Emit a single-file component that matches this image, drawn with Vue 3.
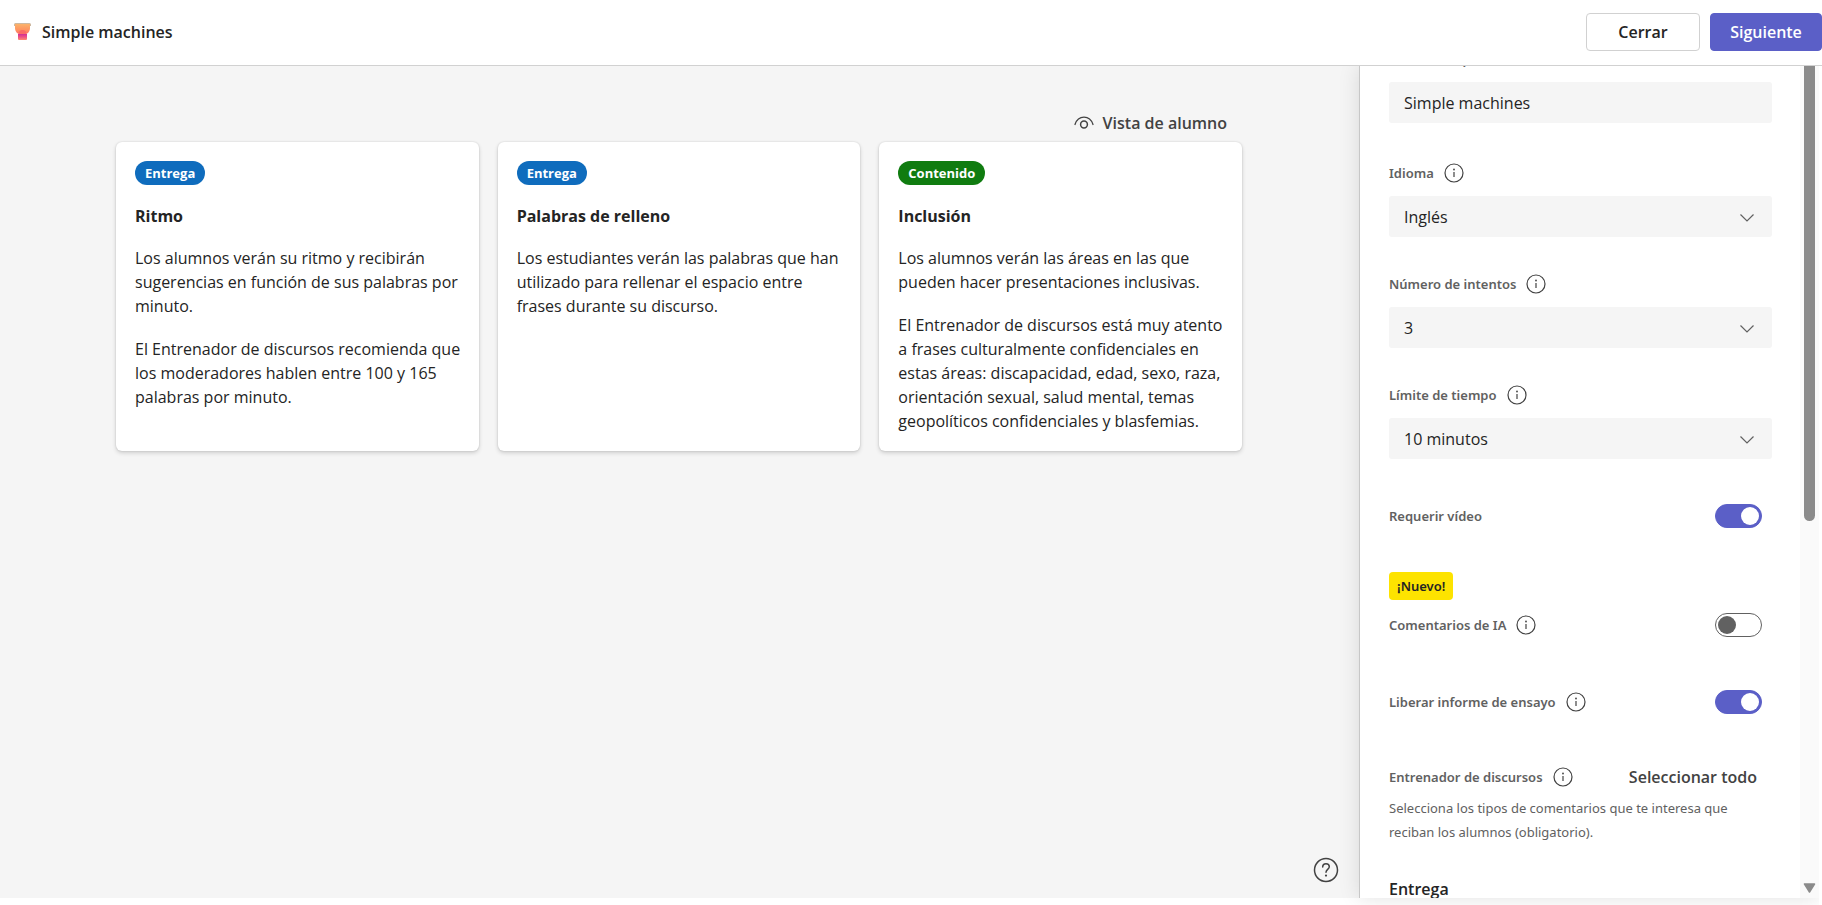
<script setup>
import { ref, onMounted } from 'vue'

const cards = [
  {
    tag: 'Entrega',
    tone: 'blue',
    title: 'Ritmo',
    text: [
      'Los alumnos verán su ritmo y recibirán sugerencias en función de sus palabras por minuto.',
      'El Entrenador de discursos recomienda que los moderadores hablen entre 100 y 165 palabras por minuto.',
    ],
  },
  {
    tag: 'Entrega',
    tone: 'blue',
    title: 'Palabras de relleno',
    text: [
      'Los estudiantes verán las palabras que han utilizado para rellenar el espacio entre frases durante su discurso.',
    ],
  },
  {
    tag: 'Contenido',
    tone: 'green',
    title: 'Inclusión',
    text: [
      'Los alumnos verán las áreas en las que pueden hacer presentaciones inclusivas.',
      'El Entrenador de discursos está muy atento a frases culturalmente confidenciales en estas áreas: discapacidad, edad, sexo, raza, orientación sexual, salud mental, temas geopolíticos confidenciales y blasfemias.',
    ],
  },
]

const selects = [
  { id: 'language', label: 'Idioma', value: 'Inglés' },
  { id: 'attempts', label: 'Número de intentos', value: '3' },
  { id: 'limit', label: 'Límite de tiempo', value: '10 minutos' },
]

const title = ref('Simple machines')
const video = ref(true)
const ai = ref(false)
const report = ref(true)
const scroller = ref(null)

onMounted(() => {
  scroller.value.scrollTop = 43
})
</script>

<template>
  <div class="app">
    <header class="top">
      <svg class="logo" viewBox="0 0 17 17" aria-hidden="true">
        <defs>
          <linearGradient id="cup" x1="0" y1="0" x2="0" y2="1">
            <stop offset="0" stop-color="#fbb36b" />
            <stop offset="0.6" stop-color="#ff9360" />
            <stop offset="1" stop-color="#fc7466" />
          </linearGradient>
          <linearGradient id="stem" x1="0" y1="0" x2="0" y2="1">
            <stop offset="0" stop-color="#cf2f96" />
            <stop offset="0.5" stop-color="#ee5284" />
            <stop offset="1" stop-color="#ff8b70" />
          </linearGradient>
        </defs>
        <path d="M1.500 0h14a1.500 1.500 0 0 1 1.500 1.500V3H0V1.500A1.500 1.500 0 0 1 1.500 0z" fill="#cdb8a0" />
        <path d="M1 1h15v3.500c0 4-2 6.500-5 6.500H6C3 11 1 8.500 1 4.500z" fill="url(#cup)" />
        <path d="M4.500 11a4 4 0 0 1 8 0z" fill="#fb6b66" />
        <path d="M4 11h9v5a1 1 0 0 1-1 1H5a1 1 0 0 1-1-1z" fill="url(#stem)" />
      </svg>
      <h1>Simple machines</h1>
      <div class="actions">
        <button type="button" class="btn">Cerrar</button>
        <button type="button" class="btn primary">Siguiente</button>
      </div>
    </header>

    <div class="body">
      <main class="canvas">
        <button type="button" class="preview">
          <svg viewBox="0 0 20 20" width="20" height="20" fill="none" stroke="currentColor" stroke-linecap="round">
            <path d="M1 11.500C2.500 7 5.500 4.200 10 4.200S17.500 7 19 11.500" stroke-width="1.300" />
            <circle cx="10" cy="11.500" r="3.400" stroke-width="1.500" />
          </svg>
          Vista de alumno
        </button>
        <div class="cards">
          <article v-for="card in cards" :key="card.title" class="card">
            <span class="tag" :class="card.tone">{{ card.tag }}</span>
            <h2>{{ card.title }}</h2>
            <p v-for="line in card.text" :key="line">{{ line }}</p>
          </article>
        </div>
        <button type="button" class="help" aria-label="Ayuda">
          <svg viewBox="0 0 26 26" width="26" height="26" fill="none" stroke="#424242" stroke-width="1.500" stroke-linecap="round">
            <circle cx="13" cy="13" r="11.500" />
            <path d="M9.700 10c0-2 1.400-3.300 3.300-3.300s3.300 1.300 3.300 3.100c0 2.500-3.300 2.800-3.300 5.400" />
            <circle cx="13" cy="18.600" r="1.100" fill="#424242" stroke="none" />
          </svg>
        </button>
      </main>

      <aside class="panel">
        <div ref="scroller" class="scroller">
          <div class="field first">
            <div class="label-row"><label for="title">Título de la presentación</label></div>
            <input id="title" v-model="title" type="text" class="control" />
          </div>

          <div v-for="s in selects" :key="s.id" class="field">
            <div class="label-row">
              <label :for="s.id">{{ s.label }}</label>
              <svg class="info" viewBox="0 0 20 20"><circle cx="10" cy="10" r="9" /><path d="M10 9v5" /><circle class="dot" cx="10" cy="6.500" r="0.900" /></svg>
            </div>
            <div class="select">
              <select :id="s.id" class="control"><option>{{ s.value }}</option></select>
              <svg class="chevron" viewBox="0 0 16 16"><path d="M1.500 4.500L8 11l6.500-6.500" /></svg>
            </div>
          </div>

          <div class="toggle-row video">
            <label for="video">Requerir vídeo</label>
            <input id="video" v-model="video" type="checkbox" role="switch" class="toggle" />
          </div>

          <span class="new">¡Nuevo!</span>
          <div class="toggle-row ai">
            <label for="ai">Comentarios de IA</label>
            <svg class="info" viewBox="0 0 20 20"><circle cx="10" cy="10" r="9" /><path d="M10 9v5" /><circle class="dot" cx="10" cy="6.500" r="0.900" /></svg>
            <input id="ai" v-model="ai" type="checkbox" role="switch" class="toggle" />
          </div>

          <div class="toggle-row report">
            <label for="report">Liberar informe de ensayo</label>
            <svg class="info" viewBox="0 0 20 20"><circle cx="10" cy="10" r="9" /><path d="M10 9v5" /><circle class="dot" cx="10" cy="6.500" r="0.900" /></svg>
            <input id="report" v-model="report" type="checkbox" role="switch" class="toggle" />
          </div>

          <div class="label-row coach">
            <span>Entrenador de discursos</span>
            <svg class="info" viewBox="0 0 20 20"><circle cx="10" cy="10" r="9" /><path d="M10 9v5" /><circle class="dot" cx="10" cy="6.500" r="0.900" /></svg>
            <button type="button" class="select-all">Seleccionar todo</button>
          </div>
          <p class="hint">Selecciona los tipos de comentarios que te interesa que reciban los alumnos (obligatorio).</p>
          <h3>Entrega</h3>
        </div>
        <div class="track" aria-hidden="true">
          <div class="thumb"></div>
          <svg viewBox="0 0 13 10" width="13" height="10"><path d="M1.500 1h10L6.500 9z" fill="#8b8b8b" stroke="#8b8b8b" stroke-width="1.500" stroke-linejoin="round" /></svg>
        </div>
      </aside>
    </div>
  </div>
</template>

<style>
body {
  background: #fff;
}
</style>

<style scoped>
.app {
  display: flex;
  flex-direction: column;
  height: 100vh;
  box-sizing: border-box;
  padding-bottom: 7px;
  overflow: hidden;
  font-family: "Segoe UI", "Open Sans", "Noto Sans", sans-serif;
  font-size: 16px;
  line-height: 24px;
  color: #242424;
}

.app *,
.app *::before {
  box-sizing: border-box;
}

button,
input,
select {
  font: inherit;
  color: inherit;
  margin: 0;
}

button {
  border: 0;
  background: none;
  padding: 0;
}

h1,
h2,
h3,
p {
  margin: 0;
  font-size: 16px;
}

.top {
  display: flex;
  align-items: center;
  flex: none;
  height: 66px;
  padding: 0 0 2px 14px;
  border-bottom: 1px solid #d1d1d1;
  background: #fff;
  position: relative;
  z-index: 2;
}

.logo {
  width: 17px;
  height: 17px;
  margin-right: 11px;
}

h1 {
  font-weight: 600;
}

.actions {
  display: flex;
  gap: 10px;
  margin-left: auto;
}

.btn {
  width: 114px;
  height: 38px;
  border: 1px solid #d1d1d1;
  border-radius: 4px;
  background: #fff;
  font-weight: 600;
}

.primary {
  width: 112px;
  border-color: #5b5fc7;
  background: #5b5fc7;
  color: #fff;
}

.body {
  display: flex;
  flex: 1;
  min-height: 0;
}

.canvas {
  position: relative;
  display: flex;
  flex-direction: column;
  flex: 1;
  padding: 45px 117px 0 116px;
  background: #f5f5f5;
}

.preview {
  display: flex;
  align-items: center;
  align-self: flex-end;
  gap: 9px;
  margin: 0 15px 7px 0;
  font-weight: 600;
  color: #424242;
}

.cards {
  display: grid;
  grid-template-columns: repeat(3, 1fr);
  gap: 19px;
}

.card {
  padding: 19px 14px 18px 19px;
  border-radius: 6px;
  background: #fff;
  box-shadow: 0 0 2px rgba(0, 0, 0, 0.14), 0 2px 4px rgba(0, 0, 0, 0.16);
}

.tag {
  display: block;
  width: fit-content;
  padding: 0 10px;
  border-radius: 12px;
  font-size: 13px;
  font-weight: 700;
  color: #fff;
}

.blue {
  background: #0f6cbd;
}

.green {
  background: #107c10;
}

h2 {
  margin-top: 19px;
  font-weight: 700;
}

.card p {
  margin-top: 18px;
}

.card p + p {
  margin-top: 19px;
}

.help {
  position: absolute;
  right: 20px;
  bottom: 15px;
  width: 26px;
  height: 26px;
}

svg {
  display: block;
  flex: none;
}

.panel {
  display: flex;
  flex: none;
  width: 460px;
  margin-right: 3px;
  border-left: 1px solid #c7c7c7;
  background: #fff;
  box-shadow: 0 0 20px rgba(0, 0, 0, 0.12);
  clip-path: inset(0 0 -20px -40px);
  position: relative;
}

.scroller {
  flex: 1;
  min-width: 0;
  padding: 24px 28px 120px 29px;
  overflow-y: scroll;
  scrollbar-width: none;
  color: #616161;
}

.field {
  margin-bottom: 35px;
}

.first {
  margin-bottom: 38px;
}

.label-row,
.toggle-row {
  display: flex;
  align-items: center;
  height: 24px;
  font-size: 13px;
  font-weight: 600;
}

.label-row label,
.label-row span,
.toggle-row label,
.new,
.hint {
  font-family: "Segoe UI", "Noto Sans", sans-serif;
}

.info {
  width: 20px;
  height: 20px;
  margin-left: 10px;
  fill: none;
  stroke: #424242;
  stroke-width: 1.2;
}

.info .dot {
  fill: #424242;
  stroke: none;
}

.control {
  display: block;
  width: 100%;
  height: 41px;
  margin-top: 11px;
  padding: 0 15px;
  border: 0;
  border-radius: 3px;
  background: #f5f5f5;
  color: #242424;
  appearance: none;
}

.select {
  position: relative;
}

.chevron {
  position: absolute;
  right: 17px;
  top: 14px;
  width: 16px;
  height: 16px;
  fill: none;
  stroke: #616161;
  stroke-width: 1.2;
  pointer-events: none;
}

.toggle {
  display: flex;
  align-items: center;
  width: 47px;
  height: 24px;
  margin: 0 10px 0 auto;
  padding: 0 2px;
  border: 1px solid #616161;
  border-radius: 12px;
  background: #fff;
  appearance: none;
}

.toggle::before {
  content: "";
  width: 18px;
  height: 18px;
  border-radius: 50%;
  background: #616161;
}

.toggle:checked {
  justify-content: flex-end;
  border-color: #5b5fc7;
  background: #5b5fc7;
}

.toggle:checked::before {
  background: #fff;
}

.video {
  margin-top: 45px;
}

.new {
  display: block;
  width: fit-content;
  margin-top: 44px;
  padding: 0 8px;
  border-radius: 4px;
  background: #fde300;
  font-size: 13px;
  font-weight: 600;
  line-height: 28px;
  color: #242424;
}

.ai {
  margin-top: 13px;
}

.report {
  margin-top: 53px;
}

.coach {
  margin-top: 51px;
}

.select-all {
  margin: 0 15px 0 auto;
  font-size: 16px;
  color: #424242;
}

.hint {
  margin-top: 7px;
  font-size: 13px;
}

h3 {
  margin-top: 33px;
  font-weight: 600;
  color: #242424;
}

.track {
  display: flex;
  flex-direction: column;
  align-items: center;
  justify-content: space-between;
  width: 19px;
  padding-bottom: 5px;
  background: #fafafa;
}

.thumb {
  width: 11px;
  height: 55%;
  border-radius: 0 0 6px 6px;
  background: #8b8b8b;
}
</style>
